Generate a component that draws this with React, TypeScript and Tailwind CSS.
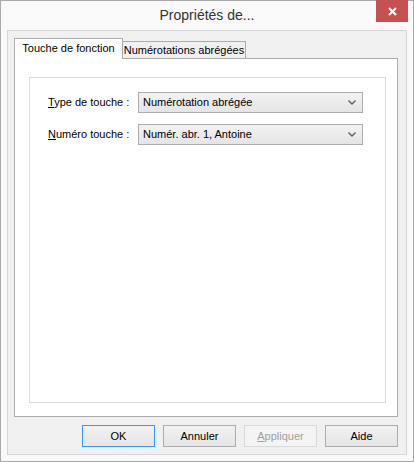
import React from "react";

const font = { fontFamily: '"Liberation Sans", Arial, sans-serif' };

function Chevron() {
  return (
    <svg width="8" height="5" viewBox="0 0 8 5" className="shrink-0">
      <path d="M0.5 0.5 L4 4 L7.5 0.5" fill="none" stroke="#5a5a5a" strokeWidth="1.3" />
    </svg>
  );
}

function Combo({ value }: { value: string }) {
  return (
    <div className="flex h-[21px] w-[225px] items-center justify-between border border-[#acacac] bg-gradient-to-b from-[#f2f2f2] to-[#e5e5e5] pl-[4px] pr-[6px] text-[11px] text-black">
      <span>{value}</span>
      <Chevron />
    </div>
  );
}

function Button({
  children,
  primary,
  disabled,
}: {
  children: React.ReactNode;
  primary?: boolean;
  disabled?: boolean;
}) {
  const tone = primary
    ? "border-[#3399ff] bg-gradient-to-b from-[#f2f2f2] to-[#e5e5e5] text-black"
    : disabled
      ? "border-[#d9d9d9] bg-[#f4f4f4] text-[#a0a0a0]"
      : "border-[#acacac] bg-gradient-to-b from-[#f2f2f2] to-[#e5e5e5] text-black";
  return (
    <div className={`flex h-[22px] w-[73px] items-center justify-center border text-[11px] ${tone}`}>
      {children}
    </div>
  );
}

export default function App() {
  return (
    <div
      className="relative flex h-[462px] w-[414px] flex-col border border-[#a9a9a9] bg-[#f9f9f9]"
      style={font}
    >
      <div className="flex h-[29px] shrink-0 items-center justify-center text-[14px] text-[#333333]">
        Propriétés de...
      </div>
      <div className="absolute right-[5px] top-[-1px] flex h-[22px] w-[32px] items-center justify-center bg-[#c75050]">
        <svg width="9" height="9" viewBox="0 0 9 9">
          <path d="M1 1 L8 8 M8 1 L1 8" stroke="white" strokeWidth="2" />
        </svg>
      </div>

      <div className="mx-[6px] flex h-[425px] w-[400px] flex-col border border-[#d6d6d6] bg-[#f0f0f0] pl-[6px] pr-[8px] pt-[7px]">
        <div className="flex h-[20px] items-end text-[11px] text-black">
          <div className="relative z-10 -mb-px flex h-[21px] w-[109px] items-center justify-center border border-b-0 border-[#acacac] bg-white pb-[2px]">
            Touche de fonction
          </div>
          <div className="flex h-[17px] w-[123px] items-center justify-center border-r border-t border-[#acacac] bg-[#f0f0f0] pt-[1px]">
            Numérotations abrégées
          </div>
        </div>

        <div className="h-[359px] w-[384px] border border-[#acacac] bg-white pl-[14px] pt-[18px]">
          <div className="flex h-[326px] w-[357px] flex-col gap-[11px] border border-[#dcdcdc] pl-[18px] pt-[14px] text-[11px] text-black">
            <div className="flex items-center">
              <span className="w-[90px]">
                <u>T</u>ype de touche :
              </span>
              <Combo value="Numérotation abrégée" />
            </div>
            <div className="flex items-center">
              <span className="w-[90px]">
                <u>N</u>uméro touche :
              </span>
              <Combo value="Numér. abr. 1, Antoine" />
            </div>
          </div>
        </div>

        <div className="mt-[8px] flex justify-end gap-[8px]">
          <Button primary>OK</Button>
          <Button>Annuler</Button>
          <Button disabled>
            <u>A</u>ppliquer
          </Button>
          <Button>Aide</Button>
        </div>
      </div>
    </div>
  );
}
